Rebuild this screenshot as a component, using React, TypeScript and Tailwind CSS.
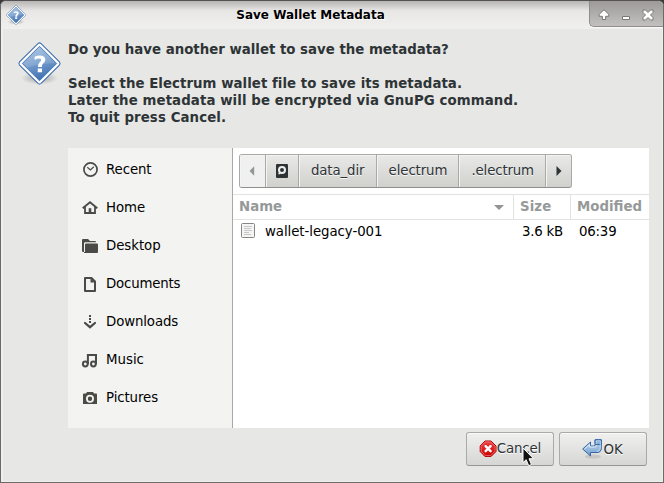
import React from "react";

const BODY = "text-[13.333px] leading-[17px]";

function QuestionIcon({ size, id }: { size: number; id: string }) {
  return (
    <svg width={size} height={size} viewBox="0 0 44 44" className="shrink-0 overflow-visible">
      <defs>
        <linearGradient id={id} x1="0" y1="0" x2="0.3" y2="1">
          <stop offset="0" stopColor="#a5c0e1" />
          <stop offset="0.5" stopColor="#7ba1d0" />
          <stop offset="1" stopColor="#4274b2" />
        </linearGradient>
        <radialGradient id={id + "s"}>
          <stop offset="0" stopColor="#000" stopOpacity="0.3" />
          <stop offset="1" stopColor="#000" stopOpacity="0" />
        </radialGradient>
      </defs>
      <ellipse cx="22" cy="37" rx="19" ry="6.5" fill={`url(#${id}s)`} />
      <path d="M20.4 1.6Q22 .3 23.6 1.6L42.4 20.4Q43.7 22 42.4 23.6L23.6 42.4Q22 43.7 20.4 42.4L1.6 23.6Q.3 22 1.6 20.4Z" fill="#fff" stroke="#3d6ead" strokeWidth="1.1" />
      <path d="M22 4.4L39.6 22 22 39.6 4.4 22Z" fill={`url(#${id})`} stroke="#4878b5" strokeWidth="1" />
      <path d="M5.2 22L22 5.2 38.6 21.8Q22 22 9 26Z" fill="#fff" opacity="0.13" />
      <path d="M17 15.2Q19.4 13.9 22.3 13.9Q28 14.1 28 18.2Q28 20.5 25.4 22.3Q24.4 23.4 24.4 25.6H20.4Q20.2 22.8 22 21.1Q23.8 19.5 23.8 18.5Q23.6 17 21.6 17Q19.4 17 17 18.4ZM20.2 27H24.6V31H20.2Z" fill="#fff" />
    </svg>
  );
}

const places: { name: string; tracking: string; icon: React.ReactNode }[] = [
  { name: "Recent", tracking: "tracking-[-0.1px]", icon: <g fill="none" stroke="#4a4a47"><circle cx="8.5" cy="8.5" r="6.6" strokeWidth="1.7" /><path d="M5.3 6.2L8.4 8.9 11.8 5.8" strokeWidth="1.2" /></g> },
  { name: "Home", tracking: "tracking-[-0.05px]", icon: <g fill="none" stroke="#4a4a47" strokeWidth="1.8"><path d="M.7 9.3L8 3.2 15.3 9.3" /><path d="M3 8V14H13V8" /><path d="M8 9.2V14" strokeWidth="2.6" /></g> },
  { name: "Desktop", tracking: "tracking-[-0.05px]", icon: <g fill="#4a4a47" transform="translate(0 1)"><path d="M0 2.2Q0 1 1 1H6L8 3H13Q14 3 14 4.3H3.2Q2 4.3 2 5.5V14H1Q0 14 0 13Z" /><path d="M3 6.5Q3 5.4 4 5.4H15Q16 5.4 16 6.4V13.8Q16 15 15 15H2V14H3Z" /></g> },
  { name: "Documents", tracking: "tracking-[-0.2px]", icon: <g transform="translate(0 1)"><path d="M3 2H9.5L13 5.5V14.9H3Z" fill="none" stroke="#4a4a47" strokeWidth="2" strokeLinejoin="round" /><path d="M8.5 2V6.4H13Z" fill="#4a4a47" /></g> },
  { name: "Downloads", tracking: "tracking-[-0.12px]", icon: <g fill="none" stroke="#4a4a47" strokeWidth="2" transform="translate(0 1)"><path d="M8 1V3M8 4V6M8 7V9" /><path d="M3 9L8 13.2 13 9" strokeLinecap="round" strokeWidth="2.2" /></g> },
  { name: "Music", tracking: "", icon: <g fill="none" stroke="#4a4a47" strokeWidth="2" transform="translate(0 1)"><circle cx="3.3" cy="12" r="2.4" /><circle cx="11.4" cy="12" r="2.4" /><path d="M5.9 12V3H14V12" /></g> },
  { name: "Pictures", tracking: "tracking-[-0.1px]", icon: <g transform="translate(0 1)"><path d="M1 4.5Q1 3.5 2 3.5H4L5 2H11L12 3.5H14Q15 3.5 15 4.5V14H1Z" fill="#4a4a47" /><circle cx="8" cy="8.8" r="3.1" fill="none" stroke="#f3f3f1" strokeWidth="1.8" /></g> },
];

function PathButton({ className, children }: { className: string; children: React.ReactNode }) {
  return (
    <div className={`flex items-center justify-center border-r border-[#a9a9a7] pb-px text-[#2e3436] shadow-[inset_1px_1px_0_#f4f4f2] [text-shadow:0_1px_0_#f8f8f8] ${className}`}>
      {children}
    </div>
  );
}

function DialogButton({ children }: { children: React.ReactNode }) {
  return (
    <div className="flex h-[34px] w-[88px] items-center justify-center gap-px rounded-[3px] border border-[#aaaaa8] border-b-[#969694] bg-linear-to-b from-[#f0f0ef] to-[#d6d6d4] text-[#2e3436] shadow-[inset_0_1px_0_#fafaf9] [text-shadow:0_1px_0_#fff]">
      {children}
    </div>
  );
}

export default function App() {
  return (
    <div className="h-[483px] w-[664px] overflow-hidden bg-[#3c3a38] font-['DejaVu_Sans','Noto_Sans',sans-serif]">
      <div className={`relative flex h-[483px] flex-col rounded-t-[6px] border border-[#6c6a68] border-t-[#555251] bg-[#e7e7e5] text-black shadow-[inset_2px_-1px_0_#efefed,inset_-1px_0_0_#efefed] ${BODY}`}>
        <header className="flex h-[28px] shrink-0 rounded-t-[5px] bg-linear-to-b from-[#b8b4b4] via-[#e8e7e6] via-35% to-[#f0f0ee] pl-[5px]">
          <div className="pt-[4px]"><QuestionIcon size={20} id="small" /></div>
          <h1 className="flex-1 pr-[4px] pt-[6px] text-center text-[12px] font-bold leading-[17px] [text-shadow:1px_1px_0_#fff]">
            <span className="inline-block pl-[10px]">Save Wallet Metadata</span>
          </h1>
          <div className="h-[26px] w-[74px] shrink-0 rounded-bl-[5px] rounded-tr-[5px] border-b border-l border-[#8f8d8b] bg-linear-to-b from-[#9d9a99] to-[#c2c1c0] shadow-[0_1px_0_#f8f8f8]">
            <svg width="73" height="25" viewBox="590 1 73 25" fill="#fff" stroke="#7b7977" strokeWidth="1">
              <path d="M604 9.8L608.8 14.3V16.3H605.6V19.5H602.4V16.3H599.2V14.3Z" strokeLinejoin="round" />
              <path d="M622.5 16.5H629.5V19.5H622.5Z" />
              <path d="M643 10H645.5L648 12.5 650.5 10H653V12.5L650.5 15 653 17.5V20H650.5L648 17.5 645.5 20H643V17.5L645.5 15 643 12.5Z" strokeLinejoin="round" />
            </svg>
          </div>
        </header>

        <section className="flex h-[119px] shrink-0 pl-[16.5px] pt-[13px]">
          <QuestionIcon size={43} id="large" />
          <div className="-mt-px ml-[7.5px] whitespace-pre font-bold text-[#2e3436]">
            <p>Do you have another wallet to save the metadata?</p>
            <p className="pt-[17px] tracking-[0.045px]">Select the Electrum wallet file to save its metadata.</p>
            <p className="tracking-[0.09px]">Later the metadata will be encrypted via GnuPG command.</p>
            <p className="tracking-[0.09px]">To quit press Cancel.</p>
          </div>
        </section>

        <main className="ml-[67px] flex h-[280px] w-[581px] shrink-0 bg-white">
          <nav className="w-[165px] border-r border-[#a8a8a5] bg-[#f3f3f1] pt-[2px]">
            {places.map((p) => (
              <div key={p.name} className="flex h-[38px] items-center gap-2 pl-[14px]">
                <svg width="16" height="16" viewBox="0 0 16 16" className="overflow-visible">{p.icon}</svg>
                <span className={p.tracking}>{p.name}</span>
              </div>
            ))}
          </nav>
          <div className="flex-1">
            <div className="h-[46px] pl-[6px] pt-[6px]">
              <div className="flex h-[34px] w-[333px] overflow-hidden rounded-[3px] border border-[#a9a9a7] border-b-[#8f8f8c] bg-linear-to-b from-[#e9e9e8] to-[#d0d0cd]">
                <PathButton className="w-[26px] bg-[#f0f0f0]">
                  <svg width="6" height="10"><path d="M5.2 .3V9.7L.5 5Z" fill="#929595" /></svg>
                </PathButton>
                <PathButton className="w-[33px]">
                  <svg width="12" height="14"><rect width="12" height="14" rx="1" fill="#2e3436" /><circle cx="6" cy="6" r="3" fill="none" stroke="#eee" strokeWidth="2" /><path d="M2.4 9.6H4.2" stroke="#eee" strokeWidth="1.5" /></svg>
                </PathButton>
                <PathButton className="w-[78px] pl-px tracking-[-0.1px]">data_dir</PathButton>
                <PathButton className="w-[83px] pl-px tracking-[-0.1px]">electrum</PathButton>
                <PathButton className="w-[87px] pl-px tracking-[-0.15px]">.electrum</PathButton>
                <PathButton className="w-[25px] border-r-0">
                  <svg width="6" height="10"><path d="M.5 0V10L5.5 5Z" fill="#2e3436" /></svg>
                </PathButton>
              </div>
            </div>
            <div className="flex h-[26px] border-y border-[#e2e2e0] font-bold leading-[23px] text-[#969999]">
              <div className="flex w-[281px] items-center justify-between border-r border-[#e2e2e0] pl-[6px] pr-[9px]">
                <span className="-mt-px">Name</span>
                <svg width="10" height="5"><path d="M0 0H10L5 5Z" fill="#929595" /></svg>
              </div>
              <div className="w-[57px] border-r border-[#e2e2e0] pl-[6px] tracking-[0.1px]">Size</div>
              <div className="pl-[6px]">Modified</div>
            </div>
            <div className="flex h-[23px] items-center">
              <div className="flex w-[281px] items-center pl-[8px]">
                <svg width="15" height="16" viewBox="0 0 15 16" className="-mt-px"><rect x=".5" y=".5" width="13" height="14" rx="1" fill="#f5f5f5" stroke="#858783" /><path d="M3 3.5H11M3 5.5H10M3 7.5H11M3 9.5H8M3 11.5H10" stroke="#c6c6c6" /></svg>
                <span className="ml-[9px] tracking-[-0.06px]">wallet-legacy-001</span>
              </div>
              <div className="w-[57px] pr-[8px] text-right tracking-[-0.2px]">3.6 kB</div>
              <div className="pl-[8px] tracking-[-0.2px]">06:39</div>
            </div>
          </div>
        </main>

        <footer className="flex justify-end gap-[5px] pr-[16px] pt-[4px]">
          <DialogButton>
            <svg width="18" height="18" viewBox="0 0 18 18" className="mb-px">
              <defs><linearGradient id="stop" x2="0" y2="1"><stop stopColor="#ee4444" /><stop offset="1" stopColor="#c90000" /></linearGradient></defs>
              <path d="M6 1H12L17 6V11.5L12 16.5H6L1.2 11.5V6Z" fill="url(#stop)" stroke="#b20000" />
              <path d="M6.3 1.9H11.7L16.1 6.3V11.2L11.7 15.6H6.3L2.2 11.2V6.3Z" fill="none" stroke="#f58484" strokeWidth=".7" />
              <path d="M6.6 6.2L11.6 11.2M11.6 6.2L6.6 11.2" stroke="#fff" strokeWidth="2.4" strokeLinecap="round" />
            </svg>
            <span className="-ml-px pb-[2px] tracking-[-0.15px]">Cancel</span>
          </DialogButton>
          <DialogButton>
            <svg width="21" height="20" viewBox="0 0 21 20">
              <defs><linearGradient id="enter" x2="0" y2="1"><stop stopColor="#c8dcf1" /><stop offset="1" stopColor="#719fce" /></linearGradient></defs>
              <ellipse cx="11" cy="17.5" rx="8" ry="2" fill="#000" opacity=".1" />
              <path d="M.7 10L8.5 3V7H11.5Q13.5 7 13.5 5.6H13V.8H19.3V9Q19.3 13.5 15 13.5H8.5V17Z" fill="url(#enter)" stroke="#3465a4" strokeLinejoin="round" />
              <path d="M2.4 10L7.6 5.4V8H12.5Q14.5 8 14.5 6" fill="none" stroke="#e4eef8" />
              <path d="M13.2 .8H19.3V5.6H13.2Z" fill="#86afd9" stroke="#3465a4" />
              <path d="M14.2 5V1.8H18.3V9Q18.3 12.5 15 12.5" fill="none" stroke="#c9ddf1" strokeWidth=".8" />
            </svg>
            <span className="-ml-px pr-px tracking-[-0.1px]">OK</span>
          </DialogButton>
        </footer>

        <svg className="absolute left-[521px] top-[446px]" width="14" height="21" viewBox="0 0 14 21">
          <path d="M1 1V15.6L4.2 12.7 6.7 18.7 9.5 17.5 7 11.7H11.5Z" fill="#111" stroke="#fff" />
        </svg>
      </div>
    </div>
  );
}
